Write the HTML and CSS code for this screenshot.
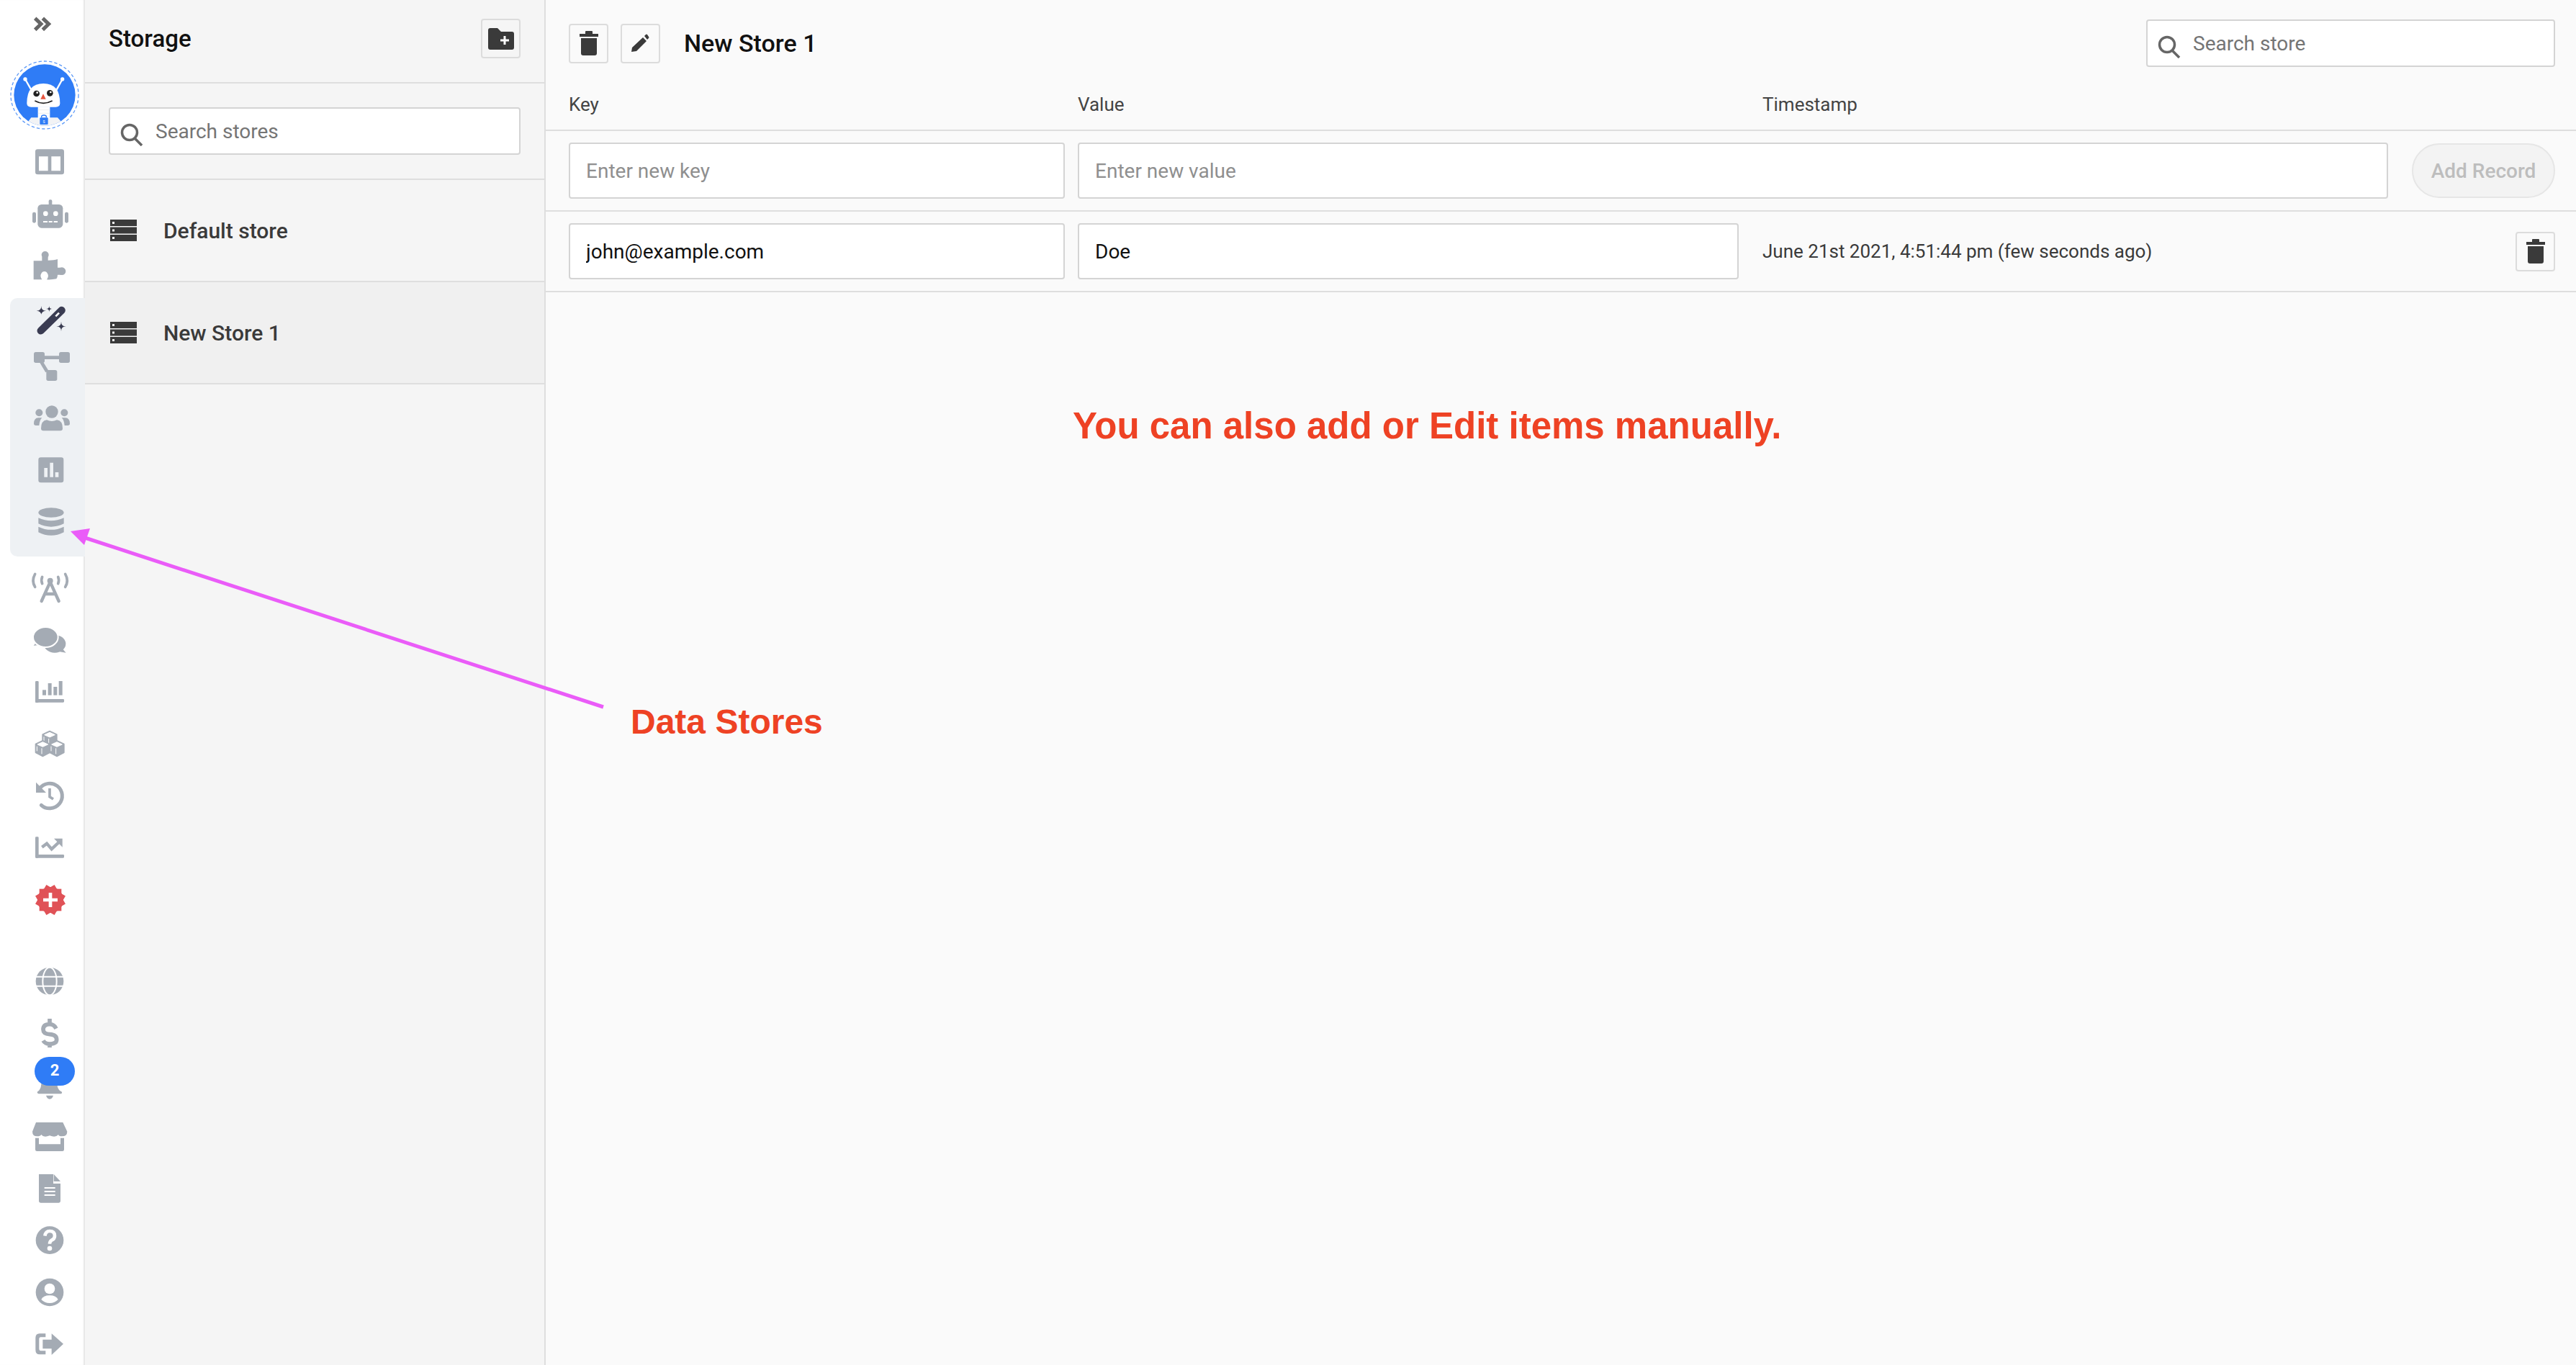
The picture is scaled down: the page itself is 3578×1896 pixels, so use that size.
FILE: index.html
```html
<!DOCTYPE html>
<html lang="en">
<head>
<meta charset="utf-8">
<title>Storage</title>
<link rel="stylesheet" href="styles.css">
</head>
<body>
<div class="app">
  <nav class="rail">
    <div class="rail-chevron"><svg class="ri" viewBox="117 9 180 180"><path d="M146 76L171 100L146 124M178 76L203 100L178 124" fill="none" stroke="#666" stroke-width="15"/></svg></div>
    <div class="rail-logo">
      <svg class="logo" viewBox="36 246 300 300">
        <defs><clipPath id="lc"><circle cx="186" cy="396" r="128"/></clipPath></defs>
        <circle cx="186" cy="396" r="141" fill="#fff" stroke="#5f9bf8" stroke-width="4" stroke-dasharray="13 9"/>
        <circle cx="186" cy="396" r="128" fill="#2f7cf6"/>
        <g clip-path="url(#lc)">
          <path d="M100 530L130 490H240L275 530Z" fill="#f2f3f5"/>
          <rect x="158" y="445" width="50" height="50" fill="#fff"/>
          <path d="M158 458H208M158 472H208" stroke="#e3e5e8" stroke-width="2"/>
        </g>
        <path d="M105 330L138 388M260 330L228 388" stroke="#fff" stroke-width="7"/>
        <circle cx="105" cy="330" r="8" fill="#fff"/><circle cx="260" cy="330" r="8" fill="#fff"/>
        <path d="M112 430Q112 348 181 348Q250 348 250 430Q250 446 232 446H130Q112 446 112 430Z" fill="#fff"/>
        <circle cx="152" cy="390" r="13" fill="#222"/><circle cx="208" cy="388" r="13" fill="#222"/>
        <circle cx="155" cy="386" r="4" fill="#fff"/><circle cx="211" cy="384" r="4" fill="#fff"/>
        <path d="M180 391L169 413H191Z" fill="#e8553f"/>
        <path d="M145 420Q180 440 218 420" fill="none" stroke="#222" stroke-width="5"/>
        <path d="M173 490V486Q173 480 183 480Q193 480 193 486V490" fill="none" stroke="#2f7cf6" stroke-width="4"/>
        <rect x="166" y="490" width="34" height="29" rx="3" fill="#2f7cf6"/>
        <text x="183" y="512" class="lock-s">S</text>
      </svg>
    </div>
    <div class="ri-row"><svg class="ri" viewBox="117 582 180 180"><path fill-rule="evenodd" d="M157 622H257Q267 622 267 632V717Q267 727 257 727H157Q147 727 147 717V632Q147 622 157 622ZM162 652V712H200V652ZM214 652V712H252V652Z"/></svg></div>
    <div class="ri-row"><svg class="ri" viewBox="117 798 180 180"><rect x="203" y="832" width="14" height="30" rx="6"/><rect x="157" y="852" width="105" height="98" rx="16"/><rect x="135" y="884" width="15" height="45" rx="7"/><rect x="270" y="884" width="15" height="45" rx="7"/><circle cx="190" cy="890" r="10" fill="#fff"/><circle cx="232" cy="890" r="10" fill="#fff"/><path d="M180 924H198M203 924H218M224 924H240" stroke="#fff" stroke-width="6"/></svg></div>
    <div class="ri-row"><svg class="ri" viewBox="117 1014 180 180"><circle cx="188" cy="1062" r="15"/><circle cx="258" cy="1130" r="16"/><path d="M140 1087H175V1070H200V1085Q225 1085 240 1080V1115H255V1145H240Q240 1155 235 1162Q215 1166 195 1165Q205 1150 198 1140A14 14 0 0 0 172 1140Q165 1150 175 1165H140Z"/></svg></div>

    <div class="rail-group">
      <div class="ri-row ri-wand"><svg class="ri" viewBox="117 45 180 180"><path d="M170 178L257 93" stroke="#3a3c52" stroke-width="31" stroke-linecap="round"/><path d="M232 118L246 104" stroke="#fff" stroke-width="8"/><path fill="#3a3c52" d="M172 75Q172 95 192 95Q172 95 172 115Q172 95 152 95Q172 95 172 75ZM205 74Q205 87 218 87Q205 87 205 100Q205 87 192 87Q205 87 205 74ZM255 140Q255 160 275 160Q255 160 255 180Q255 160 235 160Q255 160 255 140Z"/></svg></div>
      <div class="ri-row ri-nodes"><svg class="ri" viewBox="117 240 180 180"><rect x="141" y="267" width="45" height="45" rx="8"/><rect x="246" y="267" width="45" height="45" rx="8"/><rect x="193" y="342" width="45" height="45" rx="8"/><path d="M180 290H248M170 305L196 348" stroke="#a4abb4" stroke-width="14" fill="none"/></svg></div>
      <div class="ri-row"><svg class="ri" viewBox="117 450 180 180"><circle cx="216" cy="516" r="26"/><circle cx="163" cy="520" r="15"/><circle cx="268" cy="520" r="15"/><path d="M171 585Q171 553 195 550Q216 560 237 550Q261 553 261 585Q261 595 251 595H181Q171 595 171 585Z"/><path d="M141 565Q141 542 160 541H175Q165 550 163 573H150Q141 573 141 565ZM291 565Q291 542 272 541H257Q267 550 269 573H282Q291 573 291 565Z"/></svg></div>
      <div class="ri-row"><svg class="ri" viewBox="117 666 180 180"><path fill-rule="evenodd" d="M170 706H255Q265 706 265 716V801Q265 811 255 811H170Q160 811 160 801V716Q160 706 170 706ZM184 750V788H198V750ZM208 728V788H222V728ZM230 768V788H244V768Z"/></svg></div>
      <div class="ri-row"><svg class="ri" viewBox="117 882 180 180"><ellipse cx="213" cy="936" rx="53" ry="20"/><path d="M160 958Q213 982 266 958V982Q213 1008 160 982ZM160 995Q213 1020 266 995V1018Q213 1045 160 1018Z"/></svg></div>
    </div>

    <div class="rail-mid">
      <div class="ri-row"><svg class="ri" viewBox="117 -39 180 180"><circle cx="209" cy="20" r="12"/><path d="M209 25L173 105M209 25L245 105M190 75H228" fill="none" stroke="#a4abb4" stroke-width="13" stroke-linecap="round"/><path d="M146 -8Q130 20 146 46M272 -8Q288 20 272 46M176 4Q170 18 176 32M242 4Q248 18 242 32" fill="none" stroke="#a4abb4" stroke-width="11" stroke-linecap="round"/></svg></div>
      <div class="ri-row"><svg class="ri" viewBox="117 177 180 180"><path d="M262 305L275 320L245 315Z"/><ellipse cx="228" cy="283" rx="46" ry="37"/><path d="M150 278L140 290L172 287Z"/><ellipse cx="190" cy="255" rx="52" ry="42" stroke="#fff" stroke-width="6"/></svg></div>
      <div class="ri-row"><svg class="ri" viewBox="117 393 180 180"><rect x="147" y="438" width="14" height="90" rx="4"/><rect x="147" y="513" width="120" height="14" rx="4"/><rect x="177" y="475" width="15" height="22"/><rect x="200" y="447" width="15" height="50"/><rect x="223" y="462" width="15" height="35"/><rect x="245" y="438" width="15" height="59"/></svg></div>
      <div class="ri-row"><svg class="ri" viewBox="117 609 180 180">
        <g transform="translate(207 680)"><path d="M0 -34L30 -20V16L0 32L-30 16V-20Z" stroke="#a4abb4" stroke-width="4" stroke-linejoin="round"/><path d="M-22 -18L0 -28L22 -18L0 -8ZM-4 -2V22M-24 -10V10" fill="#fff" stroke="#fff" stroke-width="3"/></g>
        <g transform="translate(178 720)"><path d="M0 -34L30 -20V16L0 32L-30 16V-20Z" stroke="#a4abb4" stroke-width="4" stroke-linejoin="round"/><path d="M-22 -18L0 -28L22 -18L0 -8ZM-4 -2V22M-24 -10V10" fill="#fff" stroke="#fff" stroke-width="3"/></g>
        <g transform="translate(237 720)"><path d="M0 -34L30 -20V16L0 32L-30 16V-20Z" stroke="#a4abb4" stroke-width="4" stroke-linejoin="round"/><path d="M-22 -18L0 -28L22 -18L0 -8ZM-4 -2V22M-24 -10V10" fill="#fff" stroke="#fff" stroke-width="3"/></g>
      </svg></div>
      <div class="ri-row"><svg class="ri" viewBox="117 825 180 180"><path d="M165 886A52 52 0 1 1 172 955" fill="none" stroke="#a4abb4" stroke-width="15" stroke-linecap="round"/><path d="M150 860V903H192Z"/><path d="M207 885V920L222 930" fill="none" stroke="#a4abb4" stroke-width="11"/></svg></div>
      <div class="ri-row"><svg class="ri" viewBox="117 1041 180 180"><rect x="147" y="1087" width="14" height="88" rx="4"/><rect x="147" y="1161" width="120" height="14" rx="4"/><path d="M175 1130L195 1115L215 1138L245 1110" fill="none" stroke="#a4abb4" stroke-width="13"/><path d="M225 1094H260V1130Z"/></svg></div>
      <div class="ri-row"><svg class="ri ri-red" viewBox="117 57 180 180"><circle cx="210" cy="150" r="54"/><rect x="164" y="104" width="92" height="92"/><rect x="164" y="104" width="92" height="92" transform="rotate(30 210 150)"/><rect x="164" y="104" width="92" height="92" transform="rotate(60 210 150)"/><path d="M180 150H240M210 120V180" stroke="#fff" stroke-width="14"/></svg></div>
    </div>

    <div class="rail-bottom">
      <div class="ri-row"><svg class="ri" viewBox="117 396 180 180"><circle cx="207" cy="489" r="58"/><ellipse cx="207" cy="489" rx="29" ry="58" fill="none" stroke="#fff" stroke-width="6"/><path d="M149 470H265M149 509H265" stroke="#fff" stroke-width="6"/></svg></div>
      <div class="ri-row"><svg class="ri" viewBox="117 612 180 180"><path d="M234 686Q225 668 207 668Q180 668 180 690Q180 708 207 710Q236 712 236 732Q236 750 207 750Q188 750 180 736M207 645V668M207 750V765" fill="none" stroke="#a4abb4" stroke-width="17"/></svg></div>
      <div class="ri-row ri-bell"><svg class="ri" viewBox="117 828 180 180"><path d="M175 900L170 930Q165 945 155 950Q155 958 165 958H250Q260 958 258 950Q245 945 240 930L235 900Z"/><path d="M192 965H222Q218 980 207 980Q196 980 192 965Z"/></svg><span class="badge">2</span></div>
      <div class="ri-row"><svg class="ri" viewBox="117 24 180 180"><path d="M150 57H262L280 95Q280 115 258 115Q245 115 243 108Q232 122 207 112Q182 122 172 108Q168 115 155 115Q135 115 135 95Z"/><path d="M147 122H162V148H252V122H267V170Q267 177 260 177H154Q147 177 147 170Z"/></svg></div>
      <div class="ri-row"><svg class="ri" viewBox="117 240 180 180"><path d="M162 273H222V312H252V385Q252 392 245 392H169Q162 392 162 385Z"/><path d="M224 273L252 303H224Z"/><path d="M185 330H230M185 345H230M185 360H230" stroke="#fff" stroke-width="6"/></svg></div>
      <div class="ri-row"><svg class="ri" viewBox="117 456 180 180"><circle cx="207" cy="548" r="58"/><path d="M187 530Q190 510 207 510Q228 510 228 530Q228 542 215 548Q207 553 207 563" fill="none" stroke="#fff" stroke-width="14"/><circle cx="207" cy="582" r="10" fill="#fff"/></svg></div>
      <div class="ri-row"><svg class="ri" viewBox="117 672 180 180"><circle cx="207" cy="765" r="58"/><circle cx="207" cy="750" r="22" fill="#fff"/><path d="M172 795Q180 778 207 778Q234 778 242 795Q228 810 207 810Q186 810 172 795Z" fill="#fff"/></svg></div>
      <div class="ri-row"><svg class="ri" viewBox="117 888 180 180"><path d="M190 937H165Q148 937 148 955V1005Q148 1024 165 1024H190V1009H170Q163 1009 163 1000V960Q163 952 170 952H190Z"/><path d="M178 962H215V937L264 980L215 1026V1000H178Z"/></svg></div>
    </div>
  </nav>

  <aside class="panel">
    <header class="panel-head">
      <h2 class="panel-title">Storage</h2>
      <button class="icon-btn" type="button">
        <svg class="folder-icon" viewBox="0 0 36 30"><path d="M0 3Q0 0 3 0H13L18 5H33Q36 5 36 8V27Q36 30 33 30H3Q0 30 0 27Z" fill="#3a3a3a"/><path d="M23 11V23M17 17H29" stroke="#fff" stroke-width="3"/></svg>
      </button>
    </header>
    <div class="panel-search">
      <label class="search-box">
        <svg class="search-icon" viewBox="0 0 32 32"><circle cx="13" cy="13" r="10.5" fill="none" stroke="#666" stroke-width="3.5"/><path d="M20 21L30 31" stroke="#666" stroke-width="3.5"/></svg>
        <input class="search-input" type="text" placeholder="Search stores">
      </label>
    </div>
    <div class="store-item">
      <svg class="store-icon" viewBox="0 0 37 30"><path fill="#3a3a3a" fill-rule="evenodd" d="M0 0H37V9H0ZM3 3V6H6V3ZM0 10.500H37V19.500H0ZM3 13.500V16.500H6V13.500ZM0 21H37V30H0ZM3 24V27H6V24Z"/></svg>
      <span>Default store</span>
    </div>
    <div class="store-item store-item-active">
      <svg class="store-icon" viewBox="0 0 37 30"><path fill="#3a3a3a" fill-rule="evenodd" d="M0 0H37V9H0ZM3 3V6H6V3ZM0 10.500H37V19.500H0ZM3 13.500V16.500H6V13.500ZM0 21H37V30H0ZM3 24V27H6V24Z"/></svg>
      <span>New Store 1</span>
    </div>
  </aside>

  <main class="main">
    <div class="toolbar">
      <button class="icon-btn" type="button">
        <svg class="trash-icon" viewBox="0 0 26 34"><path fill="#3a3a3a" d="M0 4H8V1Q8 0 9 0H17Q18 0 18 1V4H26V8H0ZM2 10H24V31Q24 34 21 34H5Q2 34 2 31Z"/></svg>
      </button>
      <button class="icon-btn" type="button">
        <svg class="pencil-icon" viewBox="0 0 28 26"><path fill="#3a3a3a" d="M1 25L2 19L17 5L22 10L8 24ZM19 3L21 1Q22 0 23 1L25 4Q26 5 25 6L23 8Z"/></svg>
      </button>
      <h1 class="store-title">New Store 1</h1>
      <label class="search-box search-box-main">
        <svg class="search-icon" viewBox="0 0 32 32"><circle cx="13" cy="13" r="10.5" fill="none" stroke="#666" stroke-width="3.5"/><path d="M20 21L30 31" stroke="#666" stroke-width="3.5"/></svg>
        <input class="search-input" type="text" placeholder="Search store">
      </label>
    </div>
    <div class="table-grid table-head">
      <span>Key</span><span>Value</span><span class="col-time">Timestamp</span>
    </div>
    <div class="new-row">
      <input class="field field-key" type="text" placeholder="Enter new key">
      <input class="field field-grow" type="text" placeholder="Enter new value">
      <button class="add-btn" type="button">Add Record</button>
    </div>
    <div class="table-grid record-row">
      <input class="field" type="text" value="john@example.com">
      <input class="field" type="text" value="Doe">
      <div class="time-cell">
        <span>June 21st 2021, 4:51:44 pm (few seconds ago)</span>
        <button class="icon-btn" type="button">
          <svg class="trash-icon" viewBox="0 0 26 34"><path fill="#3a3a3a" d="M0 4H8V1Q8 0 9 0H17Q18 0 18 1V4H26V8H0ZM2 10H24V31Q24 34 21 34H5Q2 34 2 31Z"/></svg>
        </button>
      </div>
    </div>
  </main>

  <div class="note note-main">You can also add or Edit items manually.</div>
  <div class="note note-stores">Data Stores</div>
  <svg class="arrow" viewBox="0 0 3578 1896"><path d="M838 982L112 745" stroke="#ea5cf8" stroke-width="5"/><path d="M98 738L125 734L117 757Z" fill="#ea5cf8"/></svg>
</div>
</body>
</html>
```
FILE: styles.css
```css
* { box-sizing: border-box; }
html, body { margin: 0; height: 100%; overflow: hidden; }
body { font-family: Roboto, "Liberation Sans", sans-serif; background: #fafafa; color: #111; }
h1, h2 { margin: 0; }
.app { position: relative; display: flex; width: 3578px; height: 1896px; overflow: hidden; }

/* rail */
.rail { position: relative; z-index: 2; flex: 0 0 118px; height: 1896px; background: #fff; box-shadow: inset -3px 0 2px -1px #e6e6e6; overflow: hidden; }
.ri { display: block; width: 60px; height: 60px; fill: #a4abb4; }
.ri-red { fill: #e05257; }
.rail-chevron { height: 66px; padding: 3px 0 0 39px; }
.rail-logo { height: 122px; padding: 16px 0 0 12px; }
.logo { display: block; width: 100px; height: 100px; }
.lock-s { font: 700 15px Roboto, sans-serif; fill: #cfe0fd; text-anchor: middle; }
.ri-row { position: relative; display: flex; align-items: center; height: 72px; padding-left: 39px; }
.rail-group { margin: 10px 0 0 14px; padding-bottom: 13px; background: #eef1f4; border-radius: 10px 0 0 10px; }
.rail-group .ri-row { padding-left: 25px; }
.rail-group .ri-wand { height: 62px; }
.rail-group .ri-nodes { height: 68px; }
.rail-mid { margin-top: 8px; }
.rail-bottom { margin-top: 41px; }
.badge { position: absolute; left: 48px; top: -2px; width: 56px; height: 40px; border-radius: 20px; background: #2f7cf6; color: #fff; font-size: 22px; font-weight: 700; line-height: 38px; text-align: center; }

/* panel */
.panel { flex: 0 0 640px; height: 1896px; background: #f5f5f5; border-right: 2px solid #dedede; }
.panel-head { display: flex; align-items: center; justify-content: space-between; height: 116px; padding: 0 33px 7px; border-bottom: 2px solid #dedede; }
.panel-title { font-size: 33px; font-weight: 500; color: #111; }
.panel-search { height: 134px; padding: 33px; border-bottom: 2px solid #dedede; }
.store-item { display: flex; align-items: center; gap: 37px; height: 142px; padding-left: 35px; border-bottom: 2px solid #dedede; font-size: 30px; font-weight: 500; color: #3a3a3a; }
.store-item-active { background: #f0f0f0; }
.store-icon { flex: none; width: 37px; height: 30px; }

/* shared controls */
.icon-btn { display: flex; align-items: center; justify-content: center; flex: none; width: 55px; height: 55px; padding: 0; background: transparent; border: 2px solid #dcdcdc; border-radius: 4px; }
.folder-icon { width: 36px; height: 30px; }
.trash-icon { width: 26px; height: 34px; }
.pencil-icon { width: 28px; height: 26px; }
.search-box { position: relative; display: block; background: #fff; border: 2px solid #d4d4d4; border-radius: 4px; height: 66px; }
.search-icon { position: absolute; left: 14px; top: 20px; width: 32px; height: 32px; }
.search-input { display: block; width: 100%; height: 100%; padding: 0 12px 0 63px; border: 0; outline: 0; background: transparent; font: 400 28px Roboto, sans-serif; }
.search-input::placeholder { color: #757575; opacity: 1; }
.search-box-main { width: 568px; margin-left: auto; }

/* main */
.main { flex: 1; min-width: 0; padding-right: 29px; background: #fafafa; }
.toolbar { display: flex; align-items: center; height: 120px; padding-left: 32px; }
.toolbar .icon-btn + .icon-btn { margin-left: 17px; }
.store-title { margin-left: 33px; font-size: 34px; font-weight: 500; color: #111; }
.table-grid { display: grid; grid-template-columns: 689px 918px 1fr; column-gap: 18px; padding-left: 32px; margin-right: -29px; padding-right: 29px; border-bottom: 2px solid #dedede; }
.table-head { height: 62px; padding-top: 10px; font-size: 26px; color: #444; }
.col-time { padding-left: 15px; }
.new-row { display: flex; align-items: center; gap: 18px; height: 112px; padding-left: 32px; margin-right: -29px; padding-right: 29px; border-bottom: 2px solid #dedede; }
.field { display: block; height: 78px; padding: 0 22px; background: #fff; border: 2px solid #d4d4d4; border-radius: 4px; outline: 0; font: 400 28px Roboto, sans-serif; color: #111; width: 100%; }
.field::placeholder { color: #8f8f8f; opacity: 1; }
.field-key { flex: 0 0 689px; width: 689px; }
.field-grow { flex: 1; width: auto; }
.add-btn { flex: none; width: 199px; height: 76px; margin-left: 15px; padding: 0; background: #f3f3f3; border: 2px solid #e6e6e6; border-radius: 38px; color: #bdbdbd; font: 500 28px Roboto, sans-serif; }
.record-row { align-items: center; height: 112px; }
.time-cell { display: flex; align-items: center; justify-content: space-between; padding-left: 15px; font-size: 26px; color: #3a3a3a; }

/* annotations */
.note { position: absolute; z-index: 3; font-family: "Liberation Sans", Arial, sans-serif; font-weight: 700; color: #ee4224; white-space: nowrap; }
.note-main { left: 1490px; top: 562px; font-size: 51px; line-height: 60px; }
.note-stores { left: 876px; top: 973px; font-size: 48px; line-height: 60px; }
.arrow { position: absolute; z-index: 3; left: 0; top: 0; width: 3578px; height: 1896px; pointer-events: none; }
```
